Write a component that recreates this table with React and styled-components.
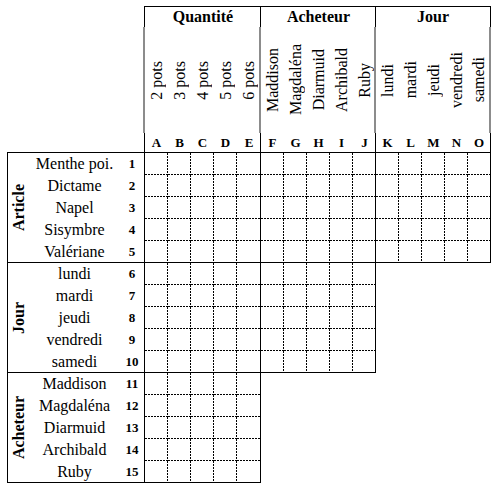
import React from "react";
import styled, { createGlobalStyle } from "styled-components";

const columnGroups = [
  {
    title: "Quantité",
    items: ["2 pots", "3 pots", "4 pots", "5 pots", "6 pots"],
    letters: ["A", "B", "C", "D", "E"],
  },
  {
    title: "Acheteur",
    items: ["Maddison", "Magdaléna", "Diarmuid", "Archibald", "Ruby"],
    letters: ["F", "G", "H", "I", "J"],
  },
  {
    title: "Jour",
    items: ["lundi", "mardi", "jeudi", "vendredi", "samedi"],
    letters: ["K", "L", "M", "N", "O"],
  },
];

const rowGroups = [
  {
    title: "Article",
    items: ["Menthe poi.", "Dictame", "Napel", "Sisymbre", "Valériane"],
  },
  {
    title: "Jour",
    items: ["lundi", "mardi", "jeudi", "vendredi", "samedi"],
  },
  {
    title: "Acheteur",
    items: ["Maddison", "Magdaléna", "Diarmuid", "Archibald", "Ruby"],
  },
];

const serif = `"Liberation Serif", "Times New Roman", serif`;
const cols = "repeat(4, 23px) 1fr";
const rows = "repeat(4, 22px) 1fr";

// 2px dash / 1px gap, drawn as backgrounds so the pattern matches the scan
const vDash = "repeating-linear-gradient(to bottom, #000 0 2px, transparent 2px 3px)";
const hDash = "repeating-linear-gradient(to right, #000 0 2px, transparent 2px 3px)";

const GlobalStyle = createGlobalStyle`
  *, *::before, *::after { box-sizing: border-box; }
  html, body { margin: 0; padding: 0; background: #fff; }
  body {
    font-family: ${serif};
    color: #000;
  }
`;

const Page = styled.div`
  padding: 6px 0 0 7px;
`;

const Puzzle = styled.div`
  display: grid;
  grid-template-columns: 138px 116px 115px 115px;
  grid-template-rows: 147px 110px 110px 110px;
`;

const HeaderGroup = styled.div`
  grid-row: 1;
  grid-column: ${(p) => p.$col + 2};
  margin-left: -1px;
  display: flex;
  flex-direction: column;
`;

const GroupTitle = styled.div`
  height: 21px;
  border-top: 1px solid #000;
  border-left: 1px solid #000;
  border-right: ${(p) => (p.$last ? "1px solid #000" : "none")};
  font-size: 16px;
  font-weight: bold;
  line-height: 20px;
  text-align: center;
`;

const LabelRow = styled.div`
  height: 106px;
  display: grid;
  grid-template-columns: ${cols};
  border-left: 1px solid #8c8c8c;
  border-right: ${(p) => (p.$last ? "1px solid #8c8c8c" : "none")};
  box-shadow: -1px 0 0 #8c8c8c
    ${(p) => (p.$last ? ", inset -1px 0 0 #8c8c8c" : "")};
`;

const LabelCell = styled.div`
  display: flex;
  align-items: center;
  justify-content: center;
`;

const Vertical = styled.span`
  writing-mode: vertical-rl;
  transform: rotate(180deg);
  white-space: nowrap;
  line-height: 1;
  font-size: 16px;
  font-weight: ${(p) => (p.$bold ? "bold" : "normal")};
`;

const LetterRow = styled.div`
  height: 20px;
  display: grid;
  grid-template-columns: ${cols};
  border-left: 1px solid #000;
  border-right: ${(p) => (p.$last ? "1px solid #000" : "none")};
  border-bottom: 1px solid #000;
  font-size: 13px;
  font-weight: bold;
  line-height: 19px;
  text-align: center;
`;

const RowGroup = styled.div`
  grid-row: ${(p) => p.$row + 2};
  grid-column: 1;
  margin-top: ${(p) => (p.$first ? "-1px" : "0")};
  border: 1px solid #000;
  border-top: ${(p) => (p.$first ? "1px solid #000" : "none")};
  display: grid;
  grid-template-columns: 21px 91px 1fr;
  grid-template-rows: ${rows};
`;

const GroupLabel = styled.div`
  grid-row: 1 / -1;
  grid-column: 1;
  display: flex;
  align-items: center;
  justify-content: center;
`;

const ItemName = styled.div`
  grid-column: 2;
  display: flex;
  align-items: center;
  justify-content: center;
  font-size: 16px;
  white-space: nowrap;
`;

const ItemNumber = styled.div`
  grid-column: 3;
  display: flex;
  align-items: center;
  justify-content: center;
  font-size: 13px;
  font-weight: bold;
`;

const Block = styled.div`
  grid-row: ${(p) => p.$row + 2};
  grid-column: ${(p) => p.$col + 2};
  display: grid;
  grid-template-columns: ${cols};
  grid-template-rows: ${rows};
  border-right: 1px solid #000;
  border-bottom: 1px solid #000;
`;

const Cell = styled.div`
  background-image: ${vDash}, ${hDash};
  background-repeat: no-repeat;
  background-position: right top, left bottom;
  background-size: ${(p) => (p.$lastCol ? "0 0" : "1px 100%")},
    ${(p) => (p.$lastRow ? "0 0" : "100% 1px")};
`;

export default function App() {
  let counter = 0;
  return (
    <>
      <GlobalStyle />
      <Page>
        <Puzzle>
          {columnGroups.map((g, c) => {
            const last = c === columnGroups.length - 1;
            return (
              <HeaderGroup key={g.title} $col={c}>
                <GroupTitle $last={last}>{g.title}</GroupTitle>
                <LabelRow $last={last}>
                  {g.items.map((it) => (
                    <LabelCell key={it}>
                      <Vertical>{it}</Vertical>
                    </LabelCell>
                  ))}
                </LabelRow>
                <LetterRow $last={last}>
                  {g.letters.map((l) => (
                    <span key={l}>{l}</span>
                  ))}
                </LetterRow>
              </HeaderGroup>
            );
          })}

          {rowGroups.map((g, r) => (
            <RowGroup key={g.title} $row={r} $first={r === 0}>
              <GroupLabel>
                <Vertical $bold>{g.title}</Vertical>
              </GroupLabel>
              {g.items.map((it) => {
                counter += 1;
                return (
                  <React.Fragment key={it}>
                    <ItemName>{it}</ItemName>
                    <ItemNumber>{counter}</ItemNumber>
                  </React.Fragment>
                );
              })}
            </RowGroup>
          ))}

          {rowGroups.map((g, r) =>
            columnGroups
              .filter((_, c) => c < columnGroups.length - r)
              .map((cg, c) => (
                <Block key={`${r}-${c}`} $row={r} $col={c}>
                  {Array.from({ length: 25 }, (_, i) => (
                    <Cell key={i} $lastCol={i % 5 === 4} $lastRow={i >= 20} />
                  ))}
                </Block>
              ))
          )}
        </Puzzle>
      </Page>
    </>
  );
}
